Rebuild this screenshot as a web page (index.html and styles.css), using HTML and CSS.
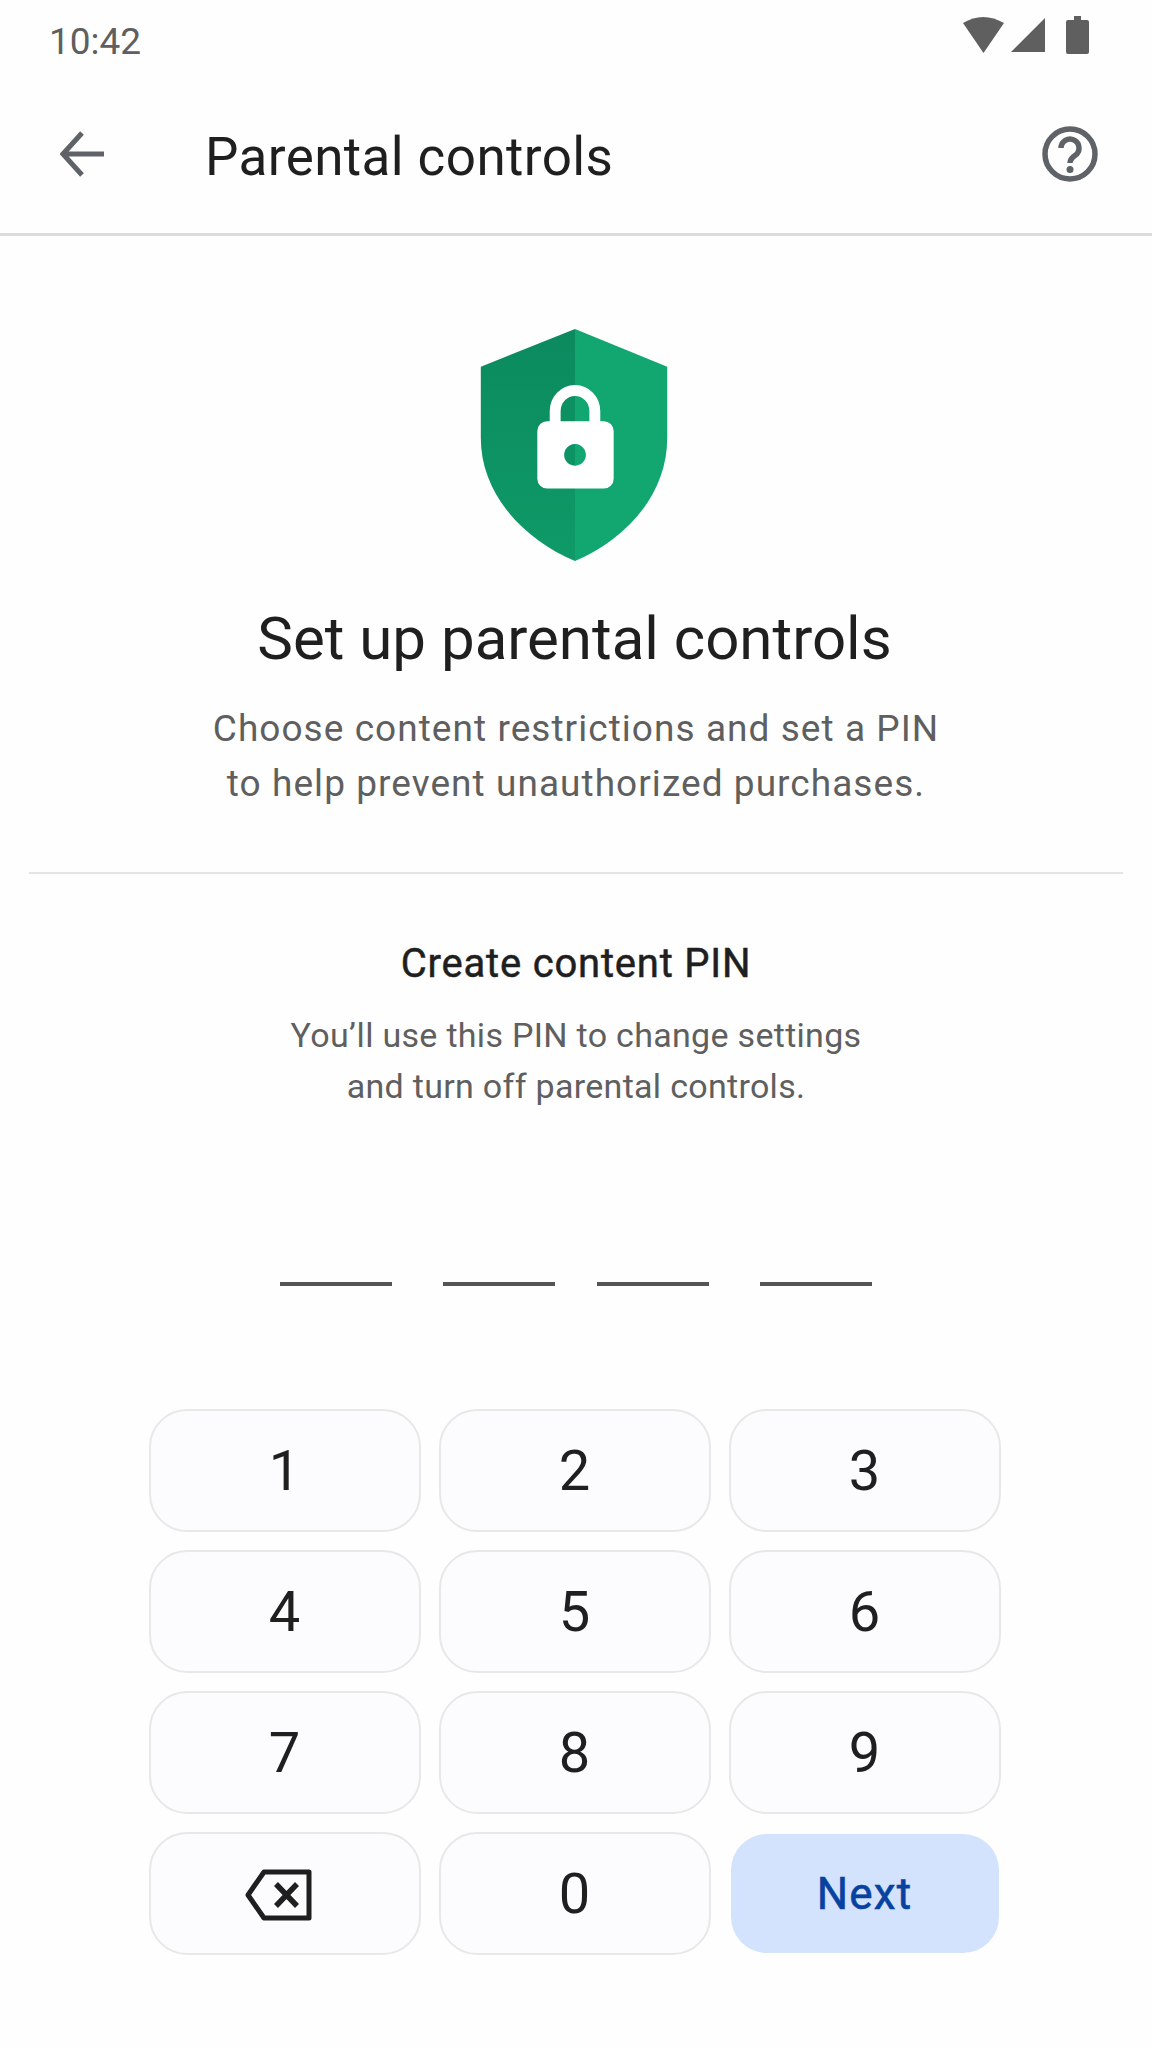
FILE: index.html
```html
<!DOCTYPE html>
<html lang="en">
<head>
<meta charset="utf-8">
<title>Parental controls</title>
<link rel="stylesheet" href="styles.css">
</head>
<body>
<div class="screen">
  <div class="status">
    <span class="time">10:42</span>
    <svg class="status-icons" width="130" height="40" viewBox="0 0 130 40">
      <path fill="#5f5f5f" d="M1 9Q21-3 42 9L21.500 39Z"/>
      <path fill="#5f5f5f" d="M49 38 83 4V38Z"/>
      <path fill="#5f5f5f" d="M112 2h7v4h6a2 2 0 0 1 2 2V38a2 2 0 0 1-2 2H106a2 2 0 0 1-2-2V8a2 2 0 0 1 2-2h6Z"/>
    </svg>
  </div>
  <header class="appbar">
    <svg class="back" width="44" height="46" viewBox="0 0 44 46"><path fill="none" stroke="#5f6368" stroke-width="5" d="M22 2 3 23 22 44M3 23H44"/></svg>
    <h1 class="title">Parental controls</h1>
    <svg class="help" width="60" height="60" viewBox="0 0 60 60">
      <circle cx="30" cy="30" r="25" fill="none" stroke="#5f6368" stroke-width="5.500"/>
      <path fill="none" stroke="#5f6368" stroke-width="5.500" d="M21 24a9 9 0 1 1 14 7.500c-3.500 2.500-5 4-5 7.500"/>
      <circle cx="30" cy="45.500" r="3.500" fill="#5f6368"/>
    </svg>
  </header>
  <main class="content">
    <svg class="shield" width="190" height="234" viewBox="0 0 190 236">
      <defs>
        <linearGradient id="shade" x1="0" y1="0" x2="0" y2="1">
          <stop offset="0" stop-color="#0b8a5e"/>
          <stop offset="1" stop-color="#0f9a68"/>
        </linearGradient>
      </defs>
      <path fill="url(#shade)" d="M95 2 0 40V112C0 170 45 215 95 236Z"/>
      <path fill="#12a670" d="M95 2 188 40V112C188 170 145 215 95 236Z"/>
      <path fill="none" stroke="#fff" stroke-width="11" d="M75 100V85a20 21 0 0 1 40 0V100"/>
      <path fill="#fff" fill-rule="evenodd" d="M67 95H124a10 10 0 0 1 10 10V153a10 10 0 0 1-10 10H67a10 10 0 0 1-10-10V105a10 10 0 0 1 10-10ZM95 118a11 11 0 1 0 .01 0Z"/>
    </svg>
    <h2 class="heading">Set up parental controls</h2>
    <p class="lead">Choose content restrictions and set a PIN<br>to help prevent unauthorized purchases.</p>
    <hr class="rule">
    <h3 class="subheading">Create content PIN</h3>
    <p class="note">You’ll use this PIN to change settings<br>and turn off parental controls.</p>
    <div class="pin">
      <span class="slot"></span><span class="slot"></span><span class="slot"></span><span class="slot"></span>
    </div>
    <div class="keypad">
      <button class="key">1</button><button class="key">2</button><button class="key">3</button>
      <button class="key">4</button><button class="key">5</button><button class="key">6</button>
      <button class="key">7</button><button class="key">8</button><button class="key">9</button>
      <button class="key" aria-label="Backspace">
        <svg class="erase" width="68" height="52" viewBox="0 0 68 52">
          <path fill="none" stroke="#1f1f1f" stroke-width="5" stroke-linejoin="round" d="M19 3H64V49H19L3 26Z"/>
          <path fill="none" stroke="#1f1f1f" stroke-width="5.500" d="M31 15 52 37M52 15 31 37"/>
        </svg>
      </button>
      <button class="key">0</button><button class="key next">Next</button>
    </div>
  </main>
</div>
</body>
</html>
```
FILE: styles.css
```css
* { box-sizing: border-box; }
html, body { margin: 0; background: #fefefe; }
body { font-family: Roboto, "Liberation Sans", sans-serif; }
.screen { width: 1152px; height: 2048px; overflow: hidden; }
.status { height: 82px; display: flex; align-items: flex-end; justify-content: space-between; padding: 0 60px 19px 49px; }
.time { font-size: 37px; line-height: 42px; color: #5f5f5f; }
.status-icons { display: block; margin-bottom: 9px; }
.appbar { height: 154px; display: flex; align-items: center; padding: 0 52px 7px 60px; border-bottom: 3px solid #dcdcdc; }
.back { flex: none; }
.title { flex: 1; margin: 5px 0 0 101px; font-size: 53px; line-height: 60px; font-weight: 400; letter-spacing: .4px; color: #1f1f1f; }
.help { flex: none; }
.content { display: flex; flex-direction: column; align-items: center; padding-top: 91px; }
.shield { display: block; margin-right: 3px; }
.heading { margin: 42px 3px 0 0; font-size: 60px; line-height: 72px; font-weight: 400; color: #1f1f1f; }
.lead { margin: 26px 0 0; font-size: 37px; line-height: 55px; letter-spacing: 1.050px; color: #5f5f5f; text-align: center; }
.rule { align-self: stretch; margin: 61px 29px 0; border: 0; border-top: 2px solid #e4e4e4; }
.subheading { margin: 67px 0 0; font-size: 40px; line-height: 46px; font-weight: 400; letter-spacing: .8px; color: #1f1f1f; -webkit-text-stroke: .5px #1f1f1f; }
.note { margin: 23px 0 0; font-size: 34px; line-height: 51px; letter-spacing: .3px; color: #5f5f5f; text-align: center; }
.pin { display: flex; margin: 170px 1px 0 0; }
.slot { width: 112px; height: 4px; background: #555; margin-left: 51px; }
.slot:first-child { margin-left: 0; }
.slot:nth-child(3) { margin-left: 42px; }
.keypad { display: grid; grid-template-columns: repeat(3, 272px); grid-auto-rows: 123px; gap: 18px; margin: 123px 3px 0 0; }
.key { display: flex; align-items: center; justify-content: center; padding: 0; background: #fcfcfe; border: 2px solid #e8e8e8; border-radius: 38px; font-family: inherit; font-size: 56px; color: #1f1f1f; }
.next { background: #d3e3fd; background-clip: padding-box; border-color: transparent; font-size: 44px; font-weight: 400; letter-spacing: 1.200px; color: #0842a0; -webkit-text-stroke: .6px #0842a0; }
.erase { display: block; margin: 3px 12px 0 0; }
```
